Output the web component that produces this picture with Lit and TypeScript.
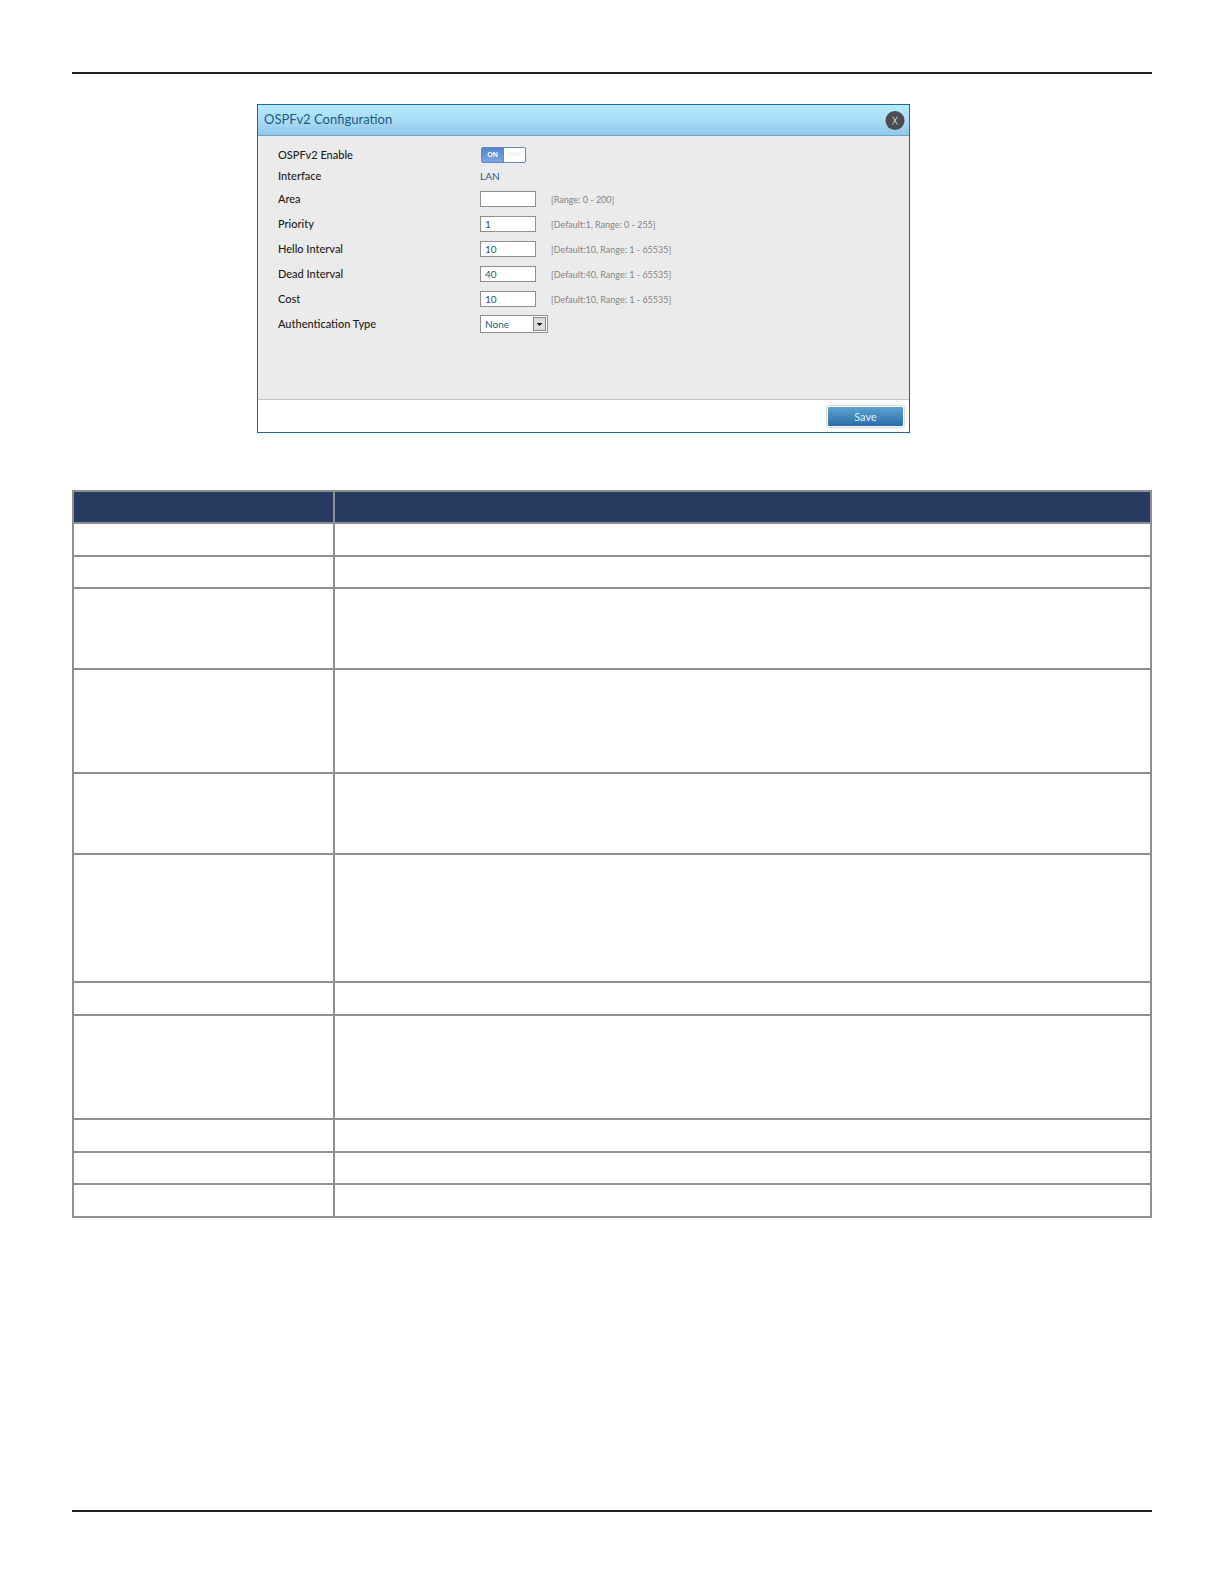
import { LitElement, html, css } from "lit";
import { customElement, state } from "lit/decorators.js";

interface NumberField {
  id: string;
  label: string;
  value: string;
  hint: string;
}

const FIELDS: NumberField[] = [
  { id: "area", label: "Area", value: "", hint: "[Range: 0 - 200]" },
  { id: "priority", label: "Priority", value: "1", hint: "[Default:1, Range: 0 - 255]" },
  { id: "hello", label: "Hello Interval", value: "10", hint: "[Default:10, Range: 1 - 65535]" },
  { id: "dead", label: "Dead Interval", value: "40", hint: "[Default:40, Range: 1 - 65535]" },
  { id: "cost", label: "Cost", value: "10", hint: "[Default:10, Range: 1 - 65535]" },
];

@customElement("ospf-dialog")
export class OspfDialog extends LitElement {
  @state() private enabled = true;

  static styles = css`
    :host {
      display: block;
      font-family: Lato, "Open Sans", sans-serif;
      font-size: 10px;
      color: #1c1c1c;
    }
    .dialog {
      border: 1px solid #1d6a98;
      background: #fff;
    }
    .head {
      display: flex;
      align-items: center;
      justify-content: space-between;
      height: 30px;
      padding: 0 4px 0 6px;
      border-bottom: 1px solid #6aa5cb;
      background: linear-gradient(#b6ebfd, #a9dcf6 50%, #92c6e9);
    }
    .title {
      margin: 0;
      font-size: 13px;
      line-height: 16px;
      padding-bottom: 2px;
      font-weight: 400;
      color: #1c5a80;
    }
    .close {
      display: flex;
      width: 20px;
      height: 20px;
      padding: 0;
      border: 0;
      background: none;
    }
    .body {
      min-height: 255px;
      padding-top: 8px;
      background: #ebebeb;
    }
    .row {
      display: grid;
      grid-template-columns: 202px 56px 1fr;
      align-items: center;
      height: 25px;
      padding-left: 20px;
    }
    .short {
      height: 21px;
    }
    .label {
      font-size: 11px;
      font-weight: 500;
    }
    .value {
      color: #1c5a80;
    }
    .hint {
      padding: 2px 0 0 15px;
      font-size: 9px;
      color: #858585;
    }
    .box {
      box-sizing: border-box;
      width: 56px;
      height: 16px;
      padding: 0 4px;
      border: 1px solid #8f8f8f;
      border-radius: 0;
      background: #fff;
      font: inherit;
      color: #1c5a80;
    }
    .toggle {
      display: flex;
      position: relative;
      box-sizing: border-box;
      width: 45px;
      height: 16px;
      margin-left: 1px;
      border: 1px solid #5b8acb;
      border-radius: 2px;
      background: #fff;
      font-family: "Liberation Sans", sans-serif;
      font-size: 7px;
      font-weight: 700;
      line-height: 14px;
      text-align: center;
    }
    .check {
      position: absolute;
      inset: 0;
      width: 100%;
      height: 100%;
      margin: 0;
      opacity: 0;
    }
    .on {
      flex: 1;
      background: linear-gradient(#5684cb, #7ba7e2);
      color: #fff;
    }
    .off {
      flex: 1;
      border-left: 1px solid #5b8acb;
      color: #f0f0e8;
    }
    .picker {
      position: relative;
      width: 68px;
      height: 18px;
    }
    .select {
      appearance: none;
      display: block;
      width: 68px;
      height: 18px;
    }
    .arrow {
      position: absolute;
      top: 2px;
      right: 2px;
      pointer-events: none;
    }
    .foot {
      display: flex;
      justify-content: flex-end;
      padding: 6px 5px 5px;
      border-top: 1px solid #c4c4c4;
    }
    .save {
      box-sizing: border-box;
      width: 77px;
      height: 21px;
      padding: 0;
      border: 1px solid #fff;
      border-radius: 2px;
      background: linear-gradient(#5ea3d1, #2a6ca8);
      box-shadow: 0 0 2px #777;
      font: inherit;
      font-size: 11px;
      color: #dff2fb;
    }
  `;

  private toggle() {
    this.enabled = !this.enabled;
  }

  render() {
    return html`
      <section class="dialog" aria-labelledby="title">
        <header class="head">
          <h1 class="title" id="title">OSPFv2 Configuration</h1>
          <button class="close" type="button" aria-label="Close">
            <svg width="20" height="20" viewBox="0 0 20 20">
              <circle cx="10" cy="10.5" r="9.5" fill="#4b4d50" />
              <path d="M7.6 6.5l4.8 8M12.4 6.5l-4.8 8" stroke="#d4d4d4" stroke-width="1" fill="none" />
            </svg>
          </button>
        </header>
        <div class="body">
          <div class="row short">
            <label class="label" for="enable">OSPFv2 Enable</label>
            <div class="toggle">
              <span class="on">ON</span><span class="off">OFF</span>
              <input class="check" id="enable" type="checkbox" .checked=${this.enabled} @change=${this.toggle} />
            </div>
          </div>
          <div class="row short">
            <span class="label">Interface</span>
            <span class="value">LAN</span>
          </div>
          ${FIELDS.map(
            (f) => html`
              <div class="row">
                <label class="label" for=${f.id}>${f.label}</label>
                <input class="box" id=${f.id} type="text" .value=${f.value} />
                <span class="hint">${f.hint}</span>
              </div>
            `
          )}
          <div class="row">
            <label class="label" for="auth">Authentication Type</label>
            <div class="picker">
              <select class="box select" id="auth">
                <option>None</option>
              </select>
              <svg class="arrow" width="13" height="14" viewBox="0 0 13 14">
                <rect x="0.5" y="0.5" width="12" height="13" fill="#dedede" stroke="#858585" />
                <path d="M3.5 6h6l-3 3z" fill="#111" />
              </svg>
            </div>
          </div>
        </div>
        <footer class="foot">
          <button class="save" type="button">Save</button>
        </footer>
      </section>
    `;
  }
}

const ROWS = ["h33", "h32", "h81", "h104", "h81", "h128", "h33", "h104", "h33", "h32", "h33"];

@customElement("app-root")
export class AppRoot extends LitElement {
  static styles = css`
    :host {
      display: block;
    }
    .page {
      display: flex;
      flex-direction: column;
      box-sizing: border-box;
      min-height: 100vh;
      padding: 72px;
      background: #fff;
    }
    .rule {
      width: 100%;
      height: 2px;
      margin: 0;
      border: 0;
      background: #1f1f21;
    }
    .last {
      margin-top: auto;
    }
    .config {
      margin: 30px 242px 57px 185px;
    }
    .grid {
      width: 100%;
      border-collapse: collapse;
      table-layout: fixed;
    }
    .cell {
      padding: 0;
      border: 2px solid #8f8f8f;
    }
    .name {
      width: 259px;
    }
    .headrow {
      height: 32px;
      background: #263d61;
    }
    .h32 {
      height: 32px;
    }
    .h33 {
      height: 33px;
    }
    .h81 {
      height: 81px;
    }
    .h104 {
      height: 104px;
    }
    .h128 {
      height: 128px;
    }
  `;

  render() {
    return html`
      <main class="page">
        <hr class="rule" />
        <ospf-dialog class="config"></ospf-dialog>
        <table class="grid">
          <thead>
            <tr class="headrow">
              <th class="cell name" scope="col"></th>
              <th class="cell" scope="col"></th>
            </tr>
          </thead>
          <tbody>
            ${ROWS.map(
              (h) => html`<tr class=${h}><td class="cell"></td><td class="cell"></td></tr>`
            )}
          </tbody>
        </table>
        <hr class="rule last" />
      </main>
    `;
  }
}
